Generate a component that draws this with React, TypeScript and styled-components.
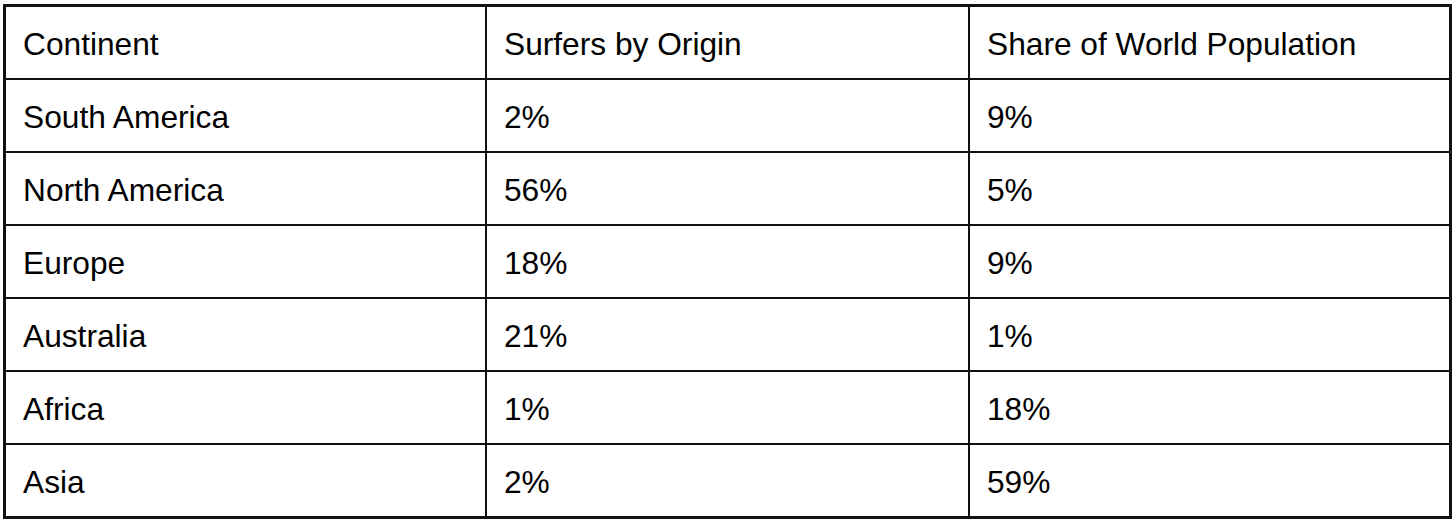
import * as React from "react";
import styled, { createGlobalStyle } from "styled-components";

interface Row {
  continent: string;
  surfers: string;
  population: string;
}

const rows: Row[] = [
  { continent: "South America", surfers: "2%", population: "9%" },
  { continent: "North America", surfers: "56%", population: "5%" },
  { continent: "Europe", surfers: "18%", population: "9%" },
  { continent: "Australia", surfers: "21%", population: "1%" },
  { continent: "Africa", surfers: "1%", population: "18%" },
  { continent: "Asia", surfers: "2%", population: "59%" }
];

const GlobalStyle = createGlobalStyle`
  html, body {
    margin: 0;
    background: #ffffff;
  }
`;

const Table = styled.div`
  display: grid;
  grid-template-columns: 479px 481px 479px;
  grid-auto-rows: 71px;
  gap: 2px;
  width: 1449px;
  margin: 4px 0 0 3px;
  padding: 3px;
  box-sizing: border-box;
  background: #111111;
  font-family: "Liberation Sans", Arial, Helvetica, sans-serif;
  font-size: 31.7px;
  color: #000000;
`;

const Cell = styled.div`
  display: flex;
  align-items: center;
  padding: 3px 17px 0;
  background: #ffffff;
  white-space: nowrap;
`;

export default function App() {
  return (
    <>
      <GlobalStyle />
      <Table>
        <Cell>Continent</Cell>
        <Cell>Surfers by Origin</Cell>
        <Cell>Share of World Population</Cell>
        {rows.map(row => (
          <React.Fragment key={row.continent}>
            <Cell>{row.continent}</Cell>
            <Cell>{row.surfers}</Cell>
            <Cell>{row.population}</Cell>
          </React.Fragment>
        ))}
      </Table>
    </>
  );
}
